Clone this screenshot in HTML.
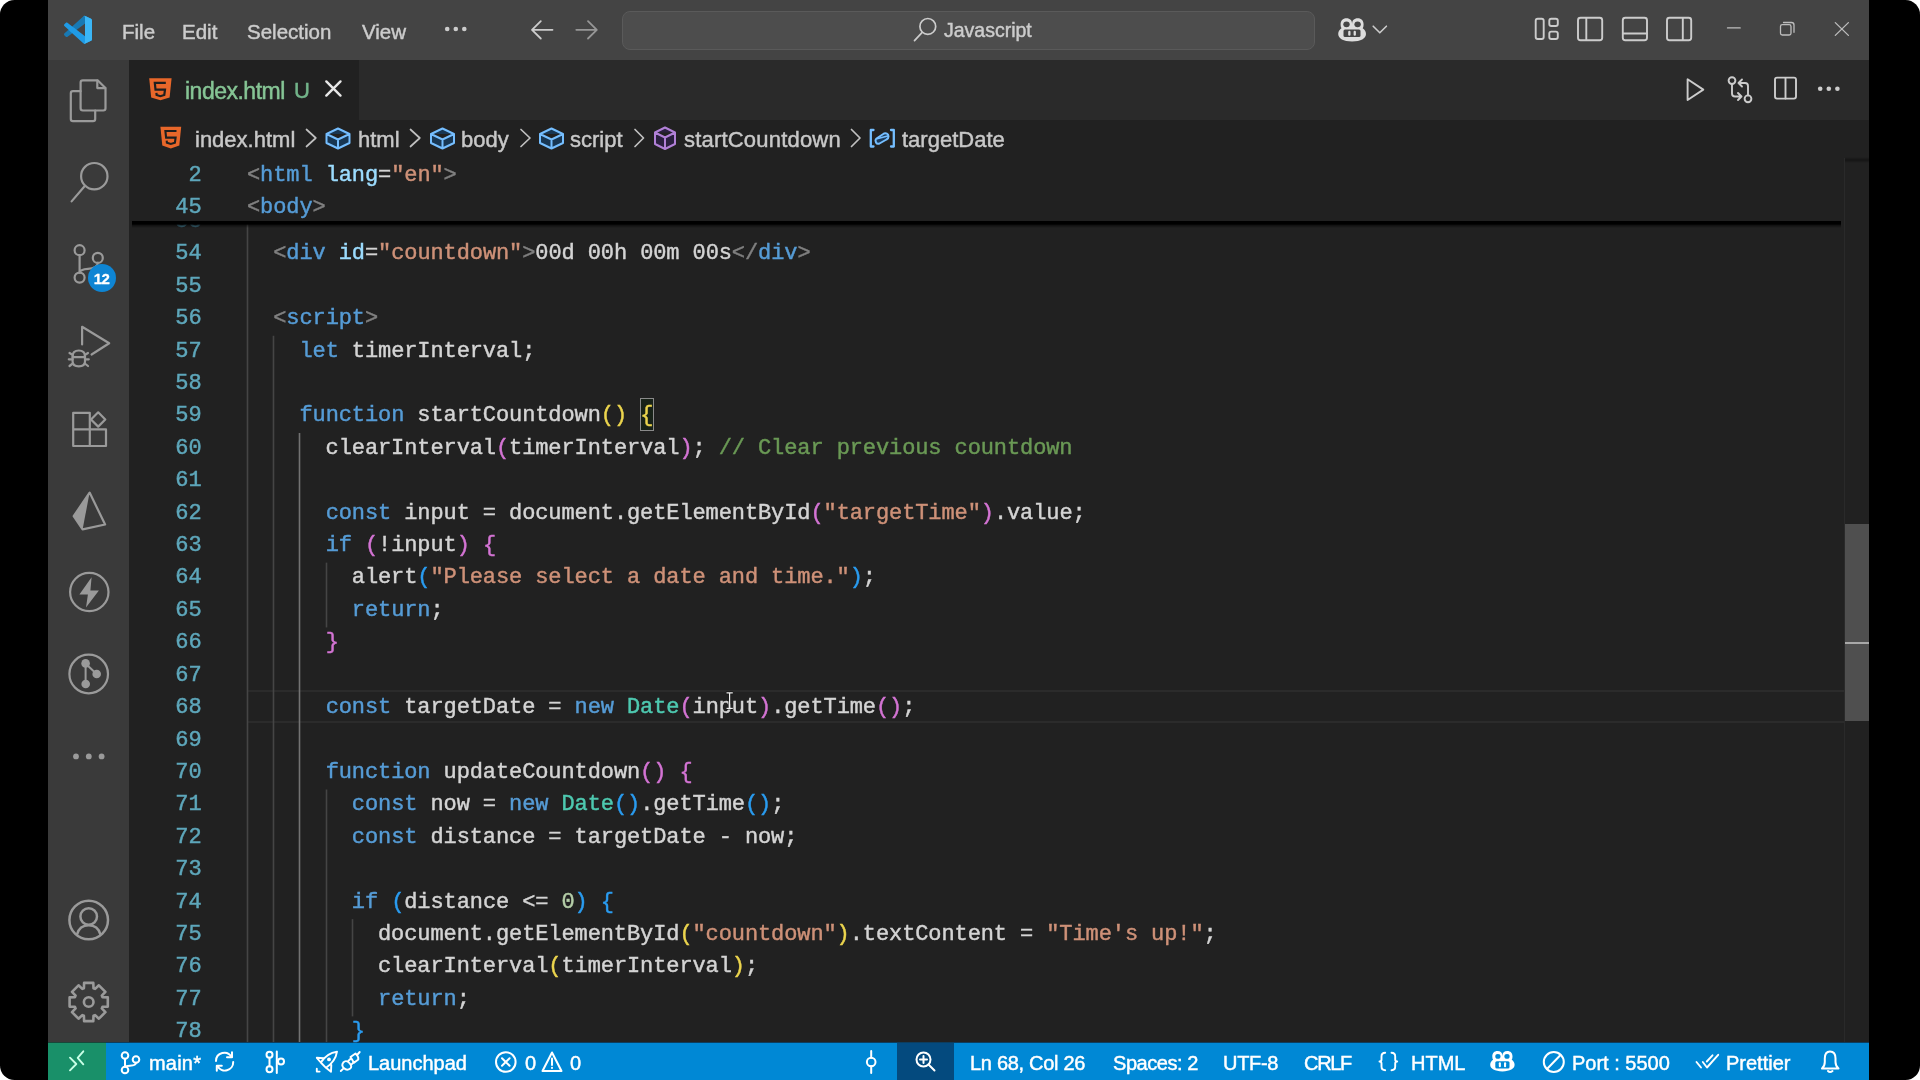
<!DOCTYPE html>
<html><head><meta charset="utf-8">
<style>
*{margin:0;padding:0;box-sizing:border-box}
html,body{width:1920px;height:1080px;overflow:hidden;background:#fff}
body{position:relative;font-family:"Liberation Sans",sans-serif;-webkit-text-stroke:0.45px}
.a,.ln{will-change:transform}
.a{position:absolute;white-space:nowrap}
#frame{position:absolute;left:0;top:0;width:1920px;height:1080px;background:#000;border-radius:14.5px}
#title{left:48px;top:0;width:1821px;height:60px;background:#444444}
#act{left:48px;top:60px;width:81px;height:982px;background:#3a3a3a}
#tabs{left:129px;top:60px;width:1740px;height:59.5px;background:#2a2a2a}
#tab1{left:129px;top:60px;width:230px;height:60px;background:#212121}
#ed{left:129px;top:119.5px;width:1740px;height:923px;background:#212121}
#status{left:48px;top:1042px;width:1821px;height:38px;background:#0088d5;border-top:1.5px solid #0d3d5e}
#remote{left:48px;top:1042px;width:58px;height:38px;background:#199069;border-top:1.5px solid #17473a}
#zoombtn{left:897px;top:1042.5px;width:57px;height:37.5px;background:#044a7e}
.menu{top:18.5px;font-size:20.5px;color:#cccccc;line-height:26px}
.code{font-family:"Liberation Mono",monospace;font-size:22px;letter-spacing:-0.1px;line-height:32.41px;color:#d4d4d4;-webkit-text-stroke:0.45px}
.l{white-space:pre;height:32.41px}
.ln{position:absolute;left:130px;width:71.5px;text-align:right;font-family:"Liberation Mono",monospace;font-size:22px;letter-spacing:-0.1px;color:#5ea7bb;line-height:32.41px}
.ln div{height:32.41px}
.k{color:#569cd6}.s{color:#ce9178}.c{color:#6a9955}.n{color:#b5cea8}.t{color:#4ec9b0}.p{color:#808080}.at{color:#9cdcfe}
.y{color:#ecd54e}.o{color:#d474d4}.b{color:#2a9cf0}
.crumb{top:126px;font-size:22px;line-height:28px;color:#c8c8c8}
.st{top:1048.5px;font-size:20px;line-height:28px;color:#ffffff}
</style></head><body>
<div id="frame"></div>
<div class="a" id="title"></div>
<div class="a" id="act"></div>
<div class="a" id="tabs"></div>
<div class="a" id="tab1"></div>
<div class="a" id="ed"></div>
<div class="a" id="status"></div>
<div class="a" id="remote"></div>
<div class="a" id="zoombtn"></div>

<!-- command center -->
<div class="a" style="left:622px;top:10.5px;width:693px;height:39px;border-radius:8px;background:#4d4d4d;border:1.5px solid #5a5a5a"></div>

<!-- menu -->
<div class="a menu" style="left:122px">File</div>
<div class="a menu" style="left:182px">Edit</div>
<div class="a menu" style="left:247px">Selection</div>
<div class="a menu" style="left:362px">View</div>
<div class="a menu" style="left:944px;top:17px;font-size:19.5px">Javascript</div>

<!-- tab -->
<div class="a" style="left:185px;top:77px;font-size:23px;letter-spacing:-0.5px;line-height:28px;color:#86c595">index.html</div>
<div class="a" style="left:294px;top:77px;font-size:22px;line-height:28px;color:#73b48a">U</div>

<!-- breadcrumbs -->
<div class="a crumb" style="left:195px">index.html</div>
<div class="a crumb" style="left:357.5px">html</div>
<div class="a crumb" style="left:461px">body</div>
<div class="a crumb" style="left:570px">script</div>
<div class="a crumb" style="left:684px;letter-spacing:0.2px">startCountdown</div>
<div class="a crumb" style="left:901.5px">targetDate</div>

<!-- current line highlight -->
<div class="a" style="left:248px;top:689.5px;width:1596px;height:33px;border:2px solid #2b2b2b;border-left:none;border-right:none"></div>
<!-- bracket match box -->
<div class="a" style="left:640.4px;top:398px;width:13.6px;height:32.6px;border:1.5px solid #8a8a8a;background:#182218"></div>

<svg class="a" style="left:0;top:0" width="1920" height="1080"><line x1="247.5" y1="206.13" x2="247.5" y2="1042.00" stroke="#454545" stroke-width="1.6"/><line x1="273.5" y1="335.77" x2="273.5" y2="1042.00" stroke="#454545" stroke-width="1.6"/><line x1="299.5" y1="433.00" x2="299.5" y2="1042.00" stroke="#727272" stroke-width="1.6"/><line x1="326.5" y1="562.64" x2="326.5" y2="627.46" stroke="#454545" stroke-width="1.6"/><line x1="326.5" y1="789.51" x2="326.5" y2="1042.00" stroke="#454545" stroke-width="1.6"/><line x1="352.5" y1="919.15" x2="352.5" y2="1016.38" stroke="#454545" stroke-width="1.6"/></svg>
<!-- CODE -->
<div class="a code" style="left:247px;top:206.13px">
<div class="l"></div>
<div class="l">  <span class="p">&lt;</span><span class="k">div</span> <span class="at">id</span>=<span class="s">"countdown"</span><span class="p">&gt;</span>00d 00h 00m 00s<span class="p">&lt;/</span><span class="k">div</span><span class="p">&gt;</span></div>
<div class="l"></div>
<div class="l">  <span class="p">&lt;</span><span class="k">script</span><span class="p">&gt;</span></div>
<div class="l">    <span class="k">let</span> timerInterval;</div>
<div class="l"></div>
<div class="l">    <span class="k">function</span> startCountdown<span class="y">()</span> <span class="y bm">{</span></div>
<div class="l">      clearInterval<span class="o">(</span>timerInterval<span class="o">)</span>;<span class="c"> // Clear previous countdown</span></div>
<div class="l"></div>
<div class="l">      <span class="k">const</span> input = document.getElementById<span class="o">(</span><span class="s">"targetTime"</span><span class="o">)</span>.value;</div>
<div class="l">      <span class="k">if</span> <span class="o">(</span>!input<span class="o">)</span> <span class="o">{</span></div>
<div class="l">        alert<span class="b">(</span><span class="s">"Please select a date and time."</span><span class="b">)</span>;</div>
<div class="l">        <span class="k">return</span>;</div>
<div class="l">      <span class="o">}</span></div>
<div class="l"></div>
<div class="l">      <span class="k">const</span> targetDate = <span class="k">new</span> <span class="t">Date</span><span class="o">(</span>input<span class="o">)</span>.getTime<span class="o">()</span>;</div>
<div class="l"></div>
<div class="l">      <span class="k">function</span> updateCountdown<span class="o">()</span> <span class="o">{</span></div>
<div class="l">        <span class="k">const</span> now = <span class="k">new</span> <span class="t">Date</span><span class="b">()</span>.getTime<span class="b">()</span>;</div>
<div class="l">        <span class="k">const</span> distance = targetDate - now;</div>
<div class="l"></div>
<div class="l">        <span class="k">if</span> <span class="b">(</span>distance &lt;= <span class="n">0</span><span class="b">)</span> <span class="b">{</span></div>
<div class="l">          document.getElementById<span class="y">(</span><span class="s">"countdown"</span><span class="y">)</span>.textContent = <span class="s">"Time's up!"</span>;</div>
<div class="l">          clearInterval<span class="y">(</span>timerInterval<span class="y">)</span>;</div>
<div class="l">          <span class="k">return</span>;</div>
<div class="l">        <span class="b">}</span></div>

</div>
<div class="ln" style="top:206.13px"><div style="color:#3d6b7c">53</div><div>54</div><div>55</div><div>56</div><div>57</div><div>58</div><div>59</div><div>60</div><div>61</div><div>62</div><div>63</div><div>64</div><div>65</div><div>66</div><div>67</div><div>68</div><div>69</div><div>70</div><div>71</div><div>72</div><div>73</div><div>74</div><div>75</div><div>76</div><div>77</div><div>78</div></div>

<!-- sticky scroll -->
<div class="a" style="left:129px;top:158px;width:1715px;height:64px;background:#212121"></div>
<div class="a" style="left:132px;top:221px;width:1709px;height:7px;background:linear-gradient(#000 0,#000 3px,rgba(0,0,0,.45) 4.5px,rgba(0,0,0,0))"></div>
<div class="a code" style="left:247px;top:160px"><div class="l"><span class="p">&lt;</span><span class="k">html</span> <span class="at">lang</span>=<span class="s">"en"</span><span class="p">&gt;</span></div><div class="l" style="height:32px"><span class="p">&lt;</span><span class="k">body</span><span class="p">&gt;</span></div></div>
<div class="ln" style="top:160px"><div>2</div><div style="height:32px">45</div></div>

<!-- scrollbar -->
<div class="a" style="left:1844px;top:158px;width:1px;height:884px;background:#2a2a2a"></div>
<div class="a" style="left:1845px;top:157px;width:24px;height:6px;background:linear-gradient(rgba(0,0,0,0),rgba(0,0,0,.35) 50%,rgba(0,0,0,0))"></div>
<div class="a" style="left:1845px;top:524px;width:24px;height:197px;background:#4f4f4f"></div>
<div class="a" style="left:1845px;top:641.5px;width:24px;height:2px;background:#a8a8a8"></div>

<!-- status texts -->
<div class="a st" style="left:148.5px;letter-spacing:0.2px">main*</div>
<div class="a st" style="left:368px">Launchpad</div>
<div class="a st" style="left:524.5px">0</div>
<div class="a st" style="left:570px">0</div>
<div class="a st" style="left:969.5px;letter-spacing:-0.3px">Ln 68, Col 26</div>
<div class="a st" style="left:1113px;letter-spacing:-0.45px">Spaces: 2</div>
<div class="a st" style="left:1222.5px;letter-spacing:-0.3px">UTF-8</div>
<div class="a st" style="left:1304px;letter-spacing:-1.3px">CRLF</div>
<div class="a st" style="left:1411px">HTML</div>
<div class="a st" style="left:1572px">Port : 5500</div>
<div class="a st" style="left:1725.5px">Prettier</div>
<div class="a st" style="left:102px;top:1051px;width:0"></div>

<svg class="a" style="left:0;top:0" width="1920" height="1080" fill="none" stroke-linecap="round" stroke-linejoin="round">
<!-- VS Code logo -->
<g transform="translate(64,15.8) scale(0.28)">
<path fill="#1f9be6" fill-rule="evenodd" d="M70.9 99.3C72.5 99.9 74.3 99.9 75.9 99.1L96.5 89.2C98.6 88.2 100 86 100 83.6V16.4C100 14 98.6 11.8 96.5 10.8L75.9 0.9C73.8-0.1 71.3 0.1 69.5 1.4C69.3 1.6 69 1.8 68.8 2.1L29.4 38L12.2 25C10.6 23.8 8.4 23.9 6.9 25.2L1.4 30.3C-0.5 31.9-0.5 34.8 1.4 36.4L16.2 50L1.4 63.6C-0.5 65.2-0.5 68.1 1.4 69.7L6.9 74.8C8.4 76.1 10.6 76.2 12.2 75L29.4 62L68.8 97.9C69.4 98.5 70.1 99 70.9 99.3ZM75 27.3L45.1 50L75 72.7V27.3Z"/>
<path fill="#000" fill-opacity="0.22" d="M29.4 38L68.8 2.1C69 1.8 69.3 1.6 69.5 1.4L75 3V27.3L45.1 50L37 44Z"/>
<path fill="#000" fill-opacity="0.22" d="M16.2 50L1.4 63.6C-0.5 65.2-0.5 68.1 1.4 69.7L6.9 74.8C8.4 76.1 10.6 76.2 12.2 75L29.4 62L22 56Z"/>
<path fill="#3bb6f6" d="M75.9 0.9L96.5 10.8C98.6 11.8 100 14 100 16.4V83.6C100 86 98.6 88.2 96.5 89.2L75.9 99.1C74.3 99.9 72.5 99.9 70.9 99.3L75 95V5Z"/>
</g>
<!-- menu more -->
<g fill="#cccccc"><circle cx="447.2" cy="29" r="2.3"/><circle cx="455.8" cy="29" r="2.3"/><circle cx="464.3" cy="29" r="2.3"/></g>
<!-- back / forward -->
<path d="M552.5 29.8H532.3M540.8 21.2L532 29.8L540.8 38.5" stroke="#cccccc" stroke-width="1.8"/>
<path d="M576.3 29.8H596.5M588 21.2L596.8 29.8L588 38.5" stroke="#979797" stroke-width="1.8"/>
<!-- search icon -->
<circle cx="927.8" cy="26.4" r="7.9" stroke="#cccccc" stroke-width="1.7"/>
<path d="M922.2 32.3L914.5 40.6" stroke="#cccccc" stroke-width="1.7"/>
<!-- copilot -->
<g fill="#dddddd">
<path d="M1346.5 18.2c3.6 0 5.6 2.2 5.6 5.6 0-3.4 2-5.6 5.6-5.6 3.8 0 5.9 2.5 5.9 6.2 0 1.6-.3 2.9-.9 3.9 1.6 1 3.3 2.9 3.3 5.8 0 4.5-5.2 7.4-13.9 7.4s-13.9-2.9-13.9-7.4c0-2.9 1.7-4.8 3.3-5.8-.6-1-.9-2.3-.9-3.9 0-3.7 2.1-6.2 5.9-6.2z"/>
</g>
<g fill="#444444">
<ellipse cx="1346.5" cy="24.3" rx="3.2" ry="2.9"/><ellipse cx="1357.6" cy="24.3" rx="3.2" ry="2.9"/>
<rect x="1343.5" y="29.5" width="17" height="7.5" rx="1.5"/>
</g>
<g fill="#dddddd"><rect x="1348.2" y="30.8" width="2.3" height="5" rx="1.1"/><rect x="1353.6" y="30.8" width="2.3" height="5" rx="1.1"/></g>
<path d="M1373.2 26.2L1379.8 32.8L1386.4 26.2" stroke="#cccccc" stroke-width="1.6"/>
<!-- layout icons -->
<g stroke="#cccccc" stroke-width="1.9">
<rect x="1535.7" y="18.8" width="8" height="20.2" rx="2"/>
<rect x="1549.3" y="18.8" width="8.5" height="7.2" rx="2"/>
<rect x="1549.3" y="31.6" width="8.5" height="7.4" rx="2"/>
<rect x="1578" y="17.8" width="24.2" height="22.4" rx="2.5"/><path d="M1586.3 18V40"/>
<rect x="1622.8" y="17.8" width="24.2" height="22.4" rx="2.5"/><path d="M1623 33.5H1647"/>
<rect x="1667" y="17.8" width="24.2" height="22.4" rx="2.5"/><path d="M1682.8 18V40"/>
</g>
<!-- window controls -->
<path d="M1727.5 27.9H1740.2" stroke="#bdbdbd" stroke-width="1.3"/>
<rect x="1780.5" y="24.6" width="10.5" height="10.4" rx="1.8" stroke="#bdbdbd" stroke-width="1.3"/>
<path d="M1783.5 22.5H1791.5Q1794 22.5 1794 25V32.3" stroke="#bdbdbd" stroke-width="1.3"/>
<path d="M1835.3 22.6L1848.4 35.4M1848.4 22.6L1835.3 35.4" stroke="#bdbdbd" stroke-width="1.3"/>

<!-- ACTIVITY BAR -->
<g stroke="#9a9a9a" stroke-width="2.2">
<!-- explorer -->
<path d="M80.6 91.2H73Q70.8 91.2 70.8 93.4V118.9Q70.8 121.1 73 121.1H93Q95.2 121.1 95.2 118.9V110.7"/>
<path d="M82.8 80.3H97.6L105.5 88V108.3Q105.5 110.5 103.3 110.5H82.8Q80.6 110.5 80.6 108.3V82.5Q80.6 80.3 82.8 80.3Z"/>
<path d="M97.3 80.6V88.1H105.2"/>
<!-- search -->
<circle cx="94.3" cy="176.2" r="13.2"/>
<path d="M85 185.8L71.6 201.4"/>
<!-- scm -->
<circle cx="79.6" cy="250.2" r="5"/>
<circle cx="97.8" cy="257.9" r="5"/>
<circle cx="79.6" cy="277.6" r="5"/>
<path d="M79.6 255.2V272.6M97.8 262.9Q97.6 268.4 88 268.8Q80.2 269.2 79.6 272.6"/>
<!-- run debug -->
<path d="M82.1 344.5V326.8L109.2 343.3L91.6 354.5"/>
<path d="M72.6 356.2Q72.6 350.5 78.8 350.5Q85 350.5 85 356.2V361.5Q85 366.3 78.8 366.3Q72.6 366.3 72.6 361.5Z"/>
<path d="M69.5 353L72.8 355M88 353L84.8 355M68.8 359.3H72.6M85 359.3H88.8M69.5 366L72.8 363.5M88 366L84.8 363.5M72.6 357.2H85"/>
<!-- extensions -->
<path d="M73.2 412.8H89.8V446H73.2ZM73.2 429.4H106V446H89.8"/>
<path d="M98.2 412.3L105.3 419.5L98.2 426.6L91 419.5Z"/>
<!-- prisma -->
<path d="M89.6 492.6L105.1 524.5L82.6 529.4L73.7 516.2Z"/>
<!-- lightning -->
<circle cx="89.3" cy="592" r="19.2"/>
<!-- git graph -->
<circle cx="88.7" cy="674" r="19.3"/>
<path d="M85.6 663.5V684M85.5 663.5L96.6 674" stroke-width="2"/>
<!-- account -->
<circle cx="88.7" cy="920" r="19.3" stroke-width="2.5"/>
<circle cx="88.7" cy="916.5" r="8.3" stroke-width="2.5"/>
<path d="M77 934.5Q79.5 925.3 88.7 925.3Q97.9 925.3 100.4 934.5" stroke-width="2.5"/>
<!-- gear -->
<path d="M83.9 988.2 L84.1 982.9 L93.3 982.9 L93.5 988.2 L95.1 988.9 L98.9 985.3 L105.4 991.8 L101.8 995.6 L102.5 997.2 L107.8 997.4 L107.8 1006.6 L102.5 1006.8 L101.8 1008.4 L105.4 1012.2 L98.9 1018.7 L95.1 1015.1 L93.5 1015.8 L93.3 1021.1 L84.1 1021.1 L83.9 1015.8 L82.3 1015.1 L78.5 1018.7 L72.0 1012.2 L75.6 1008.4 L74.9 1006.8 L69.6 1006.6 L69.6 997.4 L74.9 997.2 L75.6 995.6 L72.0 991.8 L78.5 985.3 L82.3 988.9Z" stroke-width="2.6"/>
<circle cx="88.7" cy="1002" r="4.8" stroke-width="2.6"/>
</g>
<g fill="#9a9a9a">
<path d="M89.6 492.6L82.6 529.4L73.7 516.2Z"/>
<path d="M91.6 577.3L79.4 594.6H87.9L86 607.6L98.9 590.4H90.4Z"/>
<circle cx="85.6" cy="663.4" r="4.3"/><circle cx="96.7" cy="674" r="4.3"/><circle cx="85.7" cy="684" r="4.3"/>
<circle cx="76" cy="756.4" r="2.9"/><circle cx="88.8" cy="756.4" r="2.9"/><circle cx="101.6" cy="756.4" r="2.9"/>
</g>
<!-- scm badge -->
<circle cx="102" cy="278" r="14" fill="#0e85d4"/>
<text x="101.5" y="283.5" text-anchor="middle" font-family="Liberation Sans" font-weight="bold" font-size="15" fill="#ffffff" stroke="#ffffff" stroke-width="0.3" letter-spacing="-0.5">12</text>

<!-- TAB -->
<path d="M149.2 78.2H171.6L169.6 97.4L160.4 100.2L151.2 97.4Z" fill="#e8672a"/>
<path d="M165.8 82.8H154.8L155.5 89.6H165L164.3 95L160.4 96.2L156.6 95L156.4 92.8" stroke="#1f1f1f" stroke-width="2.2" stroke-linecap="butt" stroke-linejoin="miter"/>
<path d="M326.3 81.4L340.5 95.6M340.5 81.4L326.3 95.6" stroke="#e8e8e8" stroke-width="2.4"/>
<!-- editor actions -->
<g stroke="#cccccc" stroke-width="1.9">
<path d="M1687.6 79.3V100L1703.3 89.6Z"/>
<circle cx="1732" cy="80.6" r="3.4"/><circle cx="1748" cy="98.8" r="3.4"/>
<path d="M1732 84V93.5Q1732 96.5 1735 96.5H1741.5M1738 93L1741.5 96.5L1738 100M1748 95.4V86Q1748 83 1745 83H1738.5M1742 79.5L1738.5 83L1742 86.5"/>
<rect x="1775" y="77.6" width="21" height="21" rx="2"/><path d="M1785.5 78V98.5"/>
</g>
<g fill="#cccccc"><circle cx="1820.2" cy="88.8" r="2.3"/><circle cx="1828.8" cy="88.8" r="2.3"/><circle cx="1837.4" cy="88.8" r="2.3"/></g>

<!-- BREADCRUMBS -->
<path d="M160.4 126.8H181.2L179.3 145.6L170.8 148.4L162.3 145.6Z" fill="#e8672a"/>
<path d="M176.5 131H165.4L166.1 137.6H175.6L174.9 142.8L170.8 144L166.9 142.8L166.7 140.6" stroke="#1f1f1f" stroke-width="2.1" stroke-linecap="butt" stroke-linejoin="miter"/>
<g stroke="#c0c0c0" stroke-width="1.7">
<path d="M306.5 129.5L315.8 138L306.5 146.5"/>
<path d="M410.5 129.5L419.8 138L410.5 146.5"/>
<path d="M521 129.5L530 138L521 146.5"/>
<path d="M635 129.5L643.5 138L635 146.5"/>
<path d="M851.5 129.5L860 138L851.5 146.5"/>
</g>
<!-- cube icons (blue) -->
<g stroke="#75beff" stroke-width="2" fill="#183652">
<g id="cube"><path d="M326.5 134L338 128.5L349.5 134V143L338 148.5L326.5 143ZM326.5 134L338 139.5L349.5 134M338 139.5V148.5"/></g>
<path d="M431 134L442.5 128.5L454 134V143L442.5 148.5L431 143ZM431 134L442.5 139.5L454 134M442.5 139.5V148.5"/>
<path d="M540 134L551.5 128.5L563 134V143L551.5 148.5L540 143ZM540 134L551.5 139.5L563 134M551.5 139.5V148.5"/>
</g>
<path d="M655 132.5L665 127.5L675 132.5V144L665 149L655 144ZM655 132.5L665 137.5L675 132.5M665 137.5V149" stroke="#b180d7" stroke-width="2" fill="#2b2040"/>
<g stroke="#75beff" stroke-width="2">
<path d="M873.5 130H870.8V146.5H873.5M891 130H893.8V146.5H891" stroke-width="2.3"/>
<path d="M876.5 138.5L884 133.5Q886.5 132.5 888 134.5L888.5 136.5Q888.5 138.5 886.5 139.5L879.5 143.5Q877 144.5 876 142.5L875.5 140.5Q875.5 139.3 876.5 138.5Z" fill="#1d3c5c"/>
<path d="M877 138.8L887.8 136" stroke-width="1.6"/>
</g>

<!-- STATUS BAR ICONS -->
<g stroke="#ffffff" stroke-width="2">
<path d="M70 1057.7L76.3 1064L70 1070.3M83.3 1051.3L77.7 1057.8L83.3 1064.3" stroke="#c8ffe6" stroke-width="1.9"/>
<circle cx="125" cy="1055.5" r="3.3"/><circle cx="136" cy="1059.5" r="3.3"/><circle cx="125" cy="1070" r="3.3"/>
<path d="M125 1058.8V1066.7M136 1062.8Q136 1065.5 130 1065.8Q125.5 1066 125 1066.7"/>
<path d="M216 1061A8.3 8.3 0 0 1 231.5 1057M233.2 1062A8.3 8.3 0 0 1 217.5 1066"/>
<path d="M227 1057.3H232V1052.3M221.8 1065.8H216.8V1070.8"/>
<circle cx="269.5" cy="1054.8" r="3"/><circle cx="269.5" cy="1069.3" r="3"/><circle cx="281" cy="1061.5" r="3"/>
<path d="M269.5 1057.8V1066.3M276.8 1051.5V1073"/>
<path d="M337 1051.7Q327 1053 320.8 1062.5L326 1067.8Q335.5 1061.5 337 1051.7ZM323.5 1058.3L316.8 1057.8L320.8 1062.5M331.3 1065L331 1071.8L326 1067.8M316.8 1068.8V1071.6H319.6" stroke-width="1.9"/>
<circle cx="329" cy="1059.4" r="1.9" fill="#ffffff" stroke="none"/>
<path d="M350.5 1057L355.5 1053.5Q358.8 1056.5 358.3 1059.5L354 1062.8Z" stroke-width="1.9"/>
<path d="M357.5 1054.5L359.7 1052M349.5 1063.2Q346 1059.5 343.3 1062.5Q341 1065.5 344 1068.3Q347 1071 350.3 1068.5Q352.5 1066.5 349.5 1063.2M348 1061.2L350.3 1059M351.3 1064.6L353.5 1062.4M343.3 1068.6L340.8 1071" stroke-width="1.9"/>
<circle cx="505.8" cy="1062" r="9.8"/><path d="M502 1058.2L509.6 1065.8M509.6 1058.2L502 1065.8"/>
<path d="M552 1052.5L561.5 1071H542.5Z"/><path d="M552 1058.5V1065M552 1067.8V1068"/>
<circle cx="871.2" cy="1062" r="4.3"/><path d="M871.2 1051V1057.7M871.2 1066.3V1073"/>
<circle cx="923.5" cy="1059.5" r="7"/><path d="M928.5 1064.5L934.5 1070.5M923.5 1056V1063M920 1059.5H927"/>
<path d="M1385.2 1052.8Q1381.5 1052.8 1381.5 1056.5V1059.5Q1381.5 1061.5 1379.5 1061.5Q1381.5 1061.5 1381.5 1063.5V1066.5Q1381.5 1070.2 1385.2 1070.2M1391.5 1052.8Q1395.2 1052.8 1395.2 1056.5V1059.5Q1395.2 1061.5 1397.2 1061.5Q1395.2 1061.5 1395.2 1063.5V1066.5Q1395.2 1070.2 1391.5 1070.2" stroke-width="1.9"/>
<circle cx="1553.8" cy="1062" r="10"/><path d="M1547 1069L1560.5 1055"/>
<path d="M1696.5 1062L1701 1067.5M1702.8 1062L1707 1067.5L1718.2 1054.8M1706.8 1061.5L1712.5 1055.3" stroke-width="1.9"/>
<path d="M1822 1068.5H1838.5Q1835.5 1066 1835.5 1062V1058.5Q1835.5 1051.5 1830 1051.5Q1824.8 1051.5 1824.8 1058.5V1062Q1824.8 1066 1822 1068.5ZM1828 1071Q1830 1073 1832.5 1071"/>
</g>
<g fill="#ffffff">
<path d="M1497.5 1051c3.1 0 4.9 1.9 4.9 4.9 0-3 1.8-4.9 4.9-4.9 3.3 0 5.2 2.2 5.2 5.4 0 1.4-.3 2.5-.8 3.4 1.4.9 2.9 2.5 2.9 5 0 3.9-4.6 6.6-12.2 6.6s-12.2-2.7-12.2-6.6c0-2.5 1.5-4.1 2.9-5-.5-.9-.8-2-.8-3.4 0-3.2 1.9-5.4 5.2-5.4z"/>
</g>
<g fill="#0088d5"><ellipse cx="1497.9" cy="1056.4" rx="2.6" ry="2.4"/><ellipse cx="1507" cy="1056.4" rx="2.6" ry="2.4"/><rect x="1495.3" y="1061.3" width="14.2" height="7.3" rx="1.5"/></g>
<g fill="#ffffff"><rect x="1498.8" y="1062.3" width="2.1" height="4.9" rx="1"/><rect x="1504" y="1062.3" width="2.1" height="4.9" rx="1"/></g>
<!-- I-beam mouse cursor -->
<path d="M726.3 692.8H732.9M729.6 692.8V708.3M726.3 708.3H732.9" stroke="#000" stroke-opacity="0.6" stroke-width="2.8" stroke-linecap="butt"/>
<path d="M726.5 692.8H732.8M729.6 692.8V708.3M726.5 708.3H732.8" stroke="#f0f0f0" stroke-width="1.3" stroke-linecap="butt"/>
</svg>

</body></html>
